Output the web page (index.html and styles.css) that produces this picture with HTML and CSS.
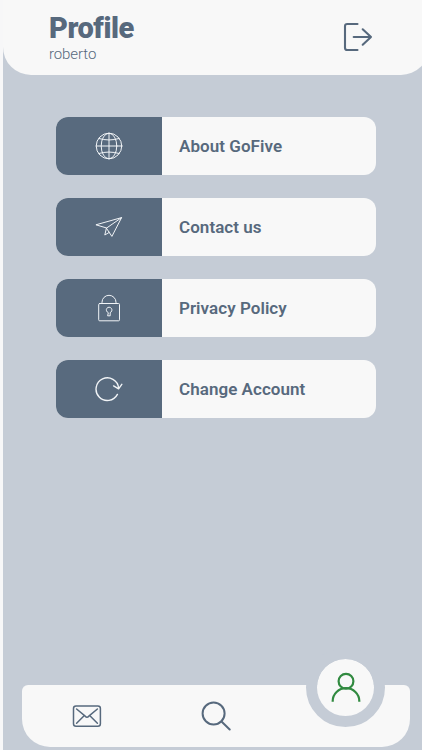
FILE: index.html
```html
<!DOCTYPE html>
<html lang="en">
<head>
<meta charset="utf-8">
<title>Profile</title>
<link rel="stylesheet" href="styles.css">
</head>
<body>
<div class="screen">
  <header class="header">
    <div class="identity">
      <h1 class="title">Profile</h1>
      <p class="user">roberto</p>
    </div>
    <svg class="logout" viewBox="0 0 30 30" aria-label="Log out"><path d="M14.500 2H4.300Q2 2 2 4.300V25.700Q2 28 4.300 28H14.500M10.700 15H28M19.700 7.300L28 15L19.700 22.700"/></svg>
  </header>
  <main class="menu">
    <a class="item">
      <span class="item-icon"><svg viewBox="0 0 28 28"><circle cx="14" cy="14" r="12.800"/><ellipse cx="14" cy="14" rx="7.800" ry="12.800"/><path d="M14 1.200V26.800M1.200 14H26.800M3.800 6.500Q14 9.500 24.200 6.500M3.800 21.500Q14 18.500 24.200 21.500"/></svg></span>
      <span class="item-label">About GoFive</span>
    </a>
    <a class="item">
      <span class="item-icon"><svg viewBox="0 0 28 28"><path d="M1.300 11.700L26.600 4.600L16.900 23.400L11.400 15.200ZM11.400 15.200L26.600 4.600M11.400 15.200L9.800 22L14.200 19.400"/></svg></span>
      <span class="item-label">Contact us</span>
    </a>
    <a class="item">
      <span class="item-icon"><svg viewBox="0 0 28 28"><rect x="3.700" y="9.500" width="20.800" height="17.300" rx="1"/><path d="M7 9.500V8.300A7 7 0 0 1 21 8.300V9.500M13 18.600A2.800 2.800 0 1 1 15.200 18.600V21.800H13Z"/></svg></span>
      <span class="item-label">Privacy Policy</span>
    </a>
    <a class="item">
      <span class="item-icon"><svg class="refresh" viewBox="0 0 28 28"><path d="M22.400 19.400A11.300 11.300 0 1 1 23.600 13M18.600 10.900L23.600 13.800L26.800 9.300"/></svg></span>
      <span class="item-label">Change Account</span>
    </a>
  </main>
  <nav class="nav">
    <a class="nav-slot"><svg class="mail" viewBox="0 0 30 24"><rect x="1.500" y="1.900" width="26.900" height="20.300" rx="2.500"/><path d="M4.600 5L13.200 12.200Q15 14.300 16.800 12.200L25.400 5M4.600 19.200L12.100 11.800M25.400 19.200L17.900 11.800"/></svg></a>
    <a class="nav-slot"><svg class="search" viewBox="0 0 30 30"><circle cx="12.600" cy="12.500" r="11"/><path d="M20.500 20.500L28.700 28.500"/></svg></a>
    <a class="nav-slot"></a>
    <a class="profile-tab"><svg class="person" viewBox="0 0 30 30"><circle cx="15" cy="9.200" r="7.400"/><path d="M1.700 29.800V29A13.300 12.800 0 0 1 28.300 29V29.800"/></svg></a>
  </nav>
</div>
</body>
</html>
```
FILE: styles.css
```css
* {
  box-sizing: border-box;
}

body {
  margin: 0;
  background: #f7f7f8;
  font-family: Roboto, sans-serif;
  color: #57697d;
  overflow: hidden;
}

svg {
  display: block;
  fill: none;
  stroke: currentColor;
  stroke-linecap: round;
  stroke-linejoin: round;
}

.screen {
  height: 750px;
  margin-left: 2.5px;
  background: #c5ccd6;
  display: flex;
  flex-direction: column;
  overflow: hidden;
}

.header {
  width: 426px;
  height: 75px;
  flex: none;
  display: flex;
  justify-content: space-between;
  padding: 11px 55.500px 0 46.500px;
  background: #f8f8f8;
  border-radius: 0 0 28px 28px;
}

.title {
  margin: 0;
  font-size: 29px;
  line-height: 34px;
  font-weight: 900;
  letter-spacing: -0.450px;
}

.user {
  margin: 0;
  font-size: 15px;
  line-height: 18px;
  font-weight: 300;
  letter-spacing: -0.100px;
}

.logout {
  width: 30px;
  height: 30px;
  margin-top: 11px;
  stroke-width: 2.100;
}

.menu {
  flex: 1;
  display: flex;
  flex-direction: column;
  gap: 22.800px;
  padding: 42.200px 46px 0 53.500px;
}

.item {
  display: flex;
  height: 58px;
  border-radius: 12px;
  overflow: hidden;
  background: #f8f8f8;
}

.item-icon {
  width: 106px;
  display: grid;
  place-items: center;
  background: #586a7e;
  color: #f1f4f7;
}

.item-icon svg {
  width: 28px;
  height: 28px;
  stroke-width: 1;
}

.item-icon .refresh {
  stroke-width: 1.400;
}

.item-label {
  padding-left: 17px;
  font-size: 17px;
  line-height: 58px;
  font-weight: 600;
  letter-spacing: 0.050px;
}

.nav {
  position: relative;
  flex: none;
  display: grid;
  grid-template-columns: repeat(3, 1fr);
  height: 61.700px;
  margin: 0 12px 3px 19.500px;
  background: #f8f8f8;
  border-radius: 6px 6px 28px 28px;
}

.nav-slot {
  display: grid;
  place-items: center;
}

.mail {
  width: 30px;
  height: 24px;
  stroke-width: 1.500;
}

.search {
  width: 30px;
  height: 30px;
  stroke-width: 2;
}

/* The ring is painted in the page colour so the tab looks notched into the bar. */
.profile-tab {
  position: absolute;
  top: -37.500px;
  right: 24.800px;
  width: 79px;
  height: 79px;
  display: grid;
  place-items: center;
  border: 11px solid #c5ccd6;
  border-radius: 50%;
  background: #f8f8f8;
  background-clip: padding-box;
}

.person {
  width: 30px;
  height: 30px;
  color: #318a40;
  stroke-width: 2.200;
  stroke-linecap: butt;
}
```
